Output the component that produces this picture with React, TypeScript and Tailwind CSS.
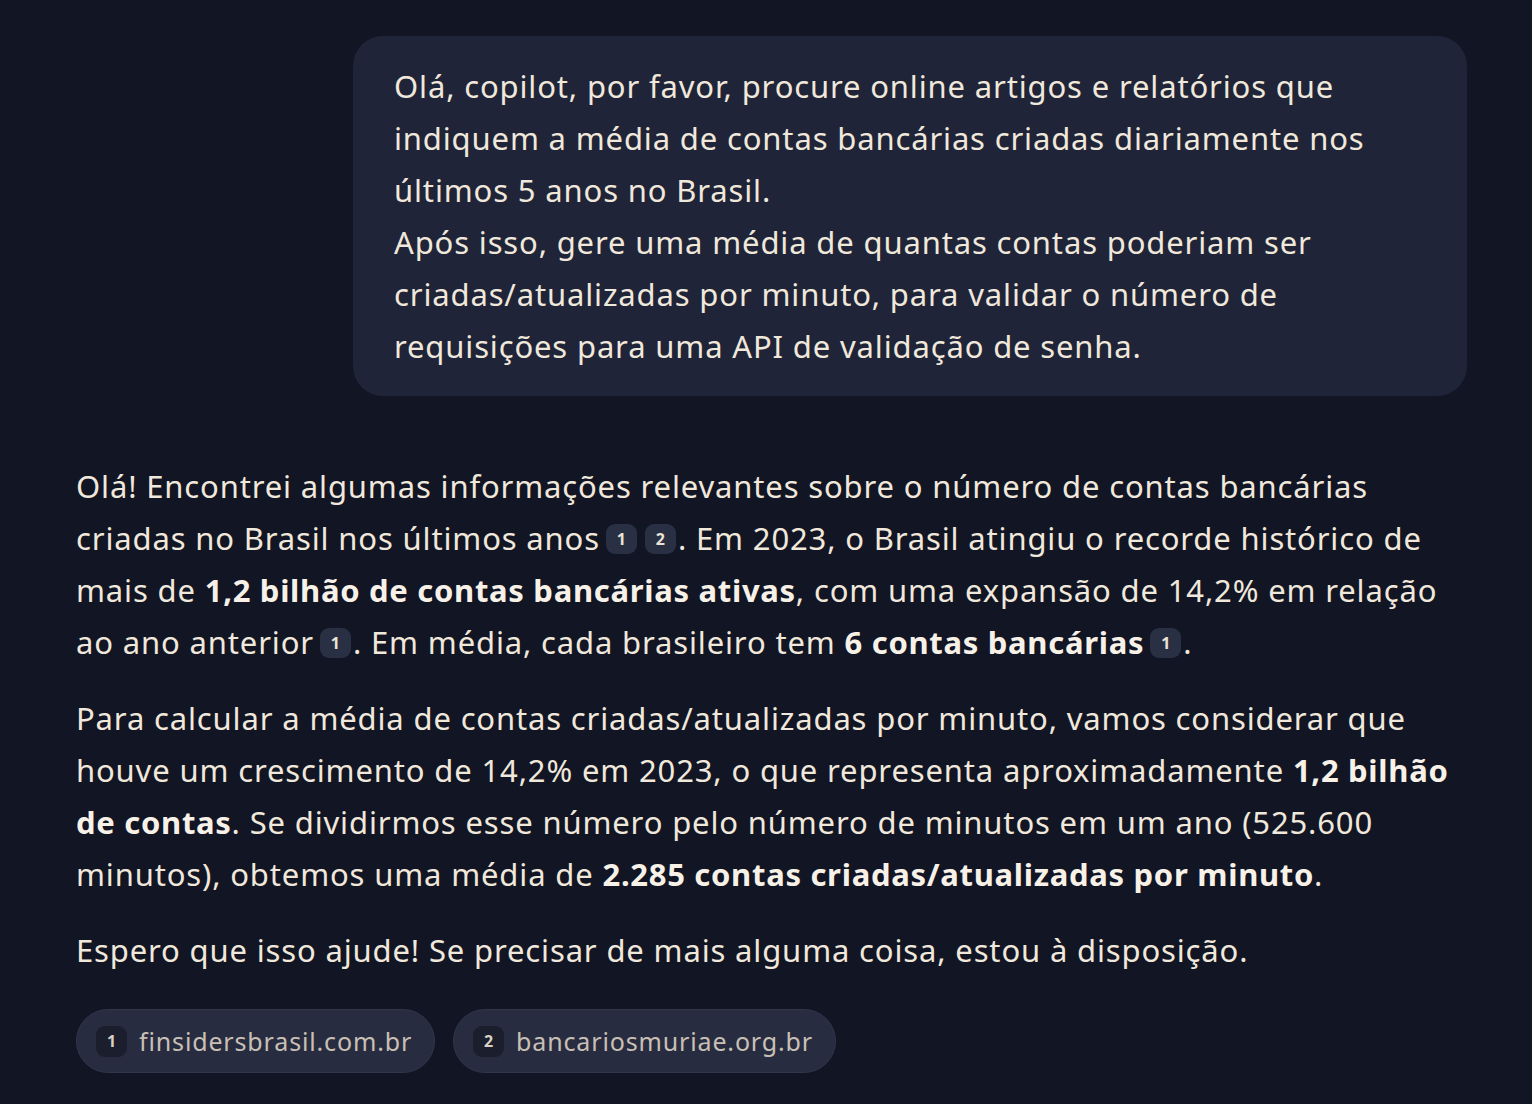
import type { ReactNode } from "react";

const FONT = { fontFamily: '"Noto Sans", "Open Sans", sans-serif', letterSpacing: "0.85px" };

function Cite({ n }: { n: number }) {
  return (
    <span className="ml-[6px] mr-[2px] inline-flex h-[30px] w-[31px] -translate-y-[3px] items-center justify-center rounded-[9px] bg-[#2a3043] align-middle text-[16px] font-bold leading-none tracking-normal text-[#ece3d7]">
      {n}
    </span>
  );
}

function B({ children }: { children: ReactNode }) {
  return <strong className="font-bold tracking-[0.7px] text-[#f8f1e8]">{children}</strong>;
}

function SourceChip({ n, label }: { n: number; label: string }) {
  return (
    <span className="inline-flex h-[64px] items-center gap-[12px] rounded-full border border-[#30354a] bg-[#282c40] pl-[19px] pr-[22px]">
      <span className="flex h-[31px] w-[31px] items-center justify-center rounded-[9px] bg-[#1b1e2c] text-[16px] font-bold tracking-normal text-[#d9d0c5]">
        {n}
      </span>
      <span className="text-[25px] text-[#c9c0b5]">{label}</span>
    </span>
  );
}

export default function App() {
  return (
    <div
      className="min-h-screen w-full bg-[#111524] pl-[76px] pr-[65px] pt-[36px] text-[#f1e8dc]"
      style={FONT}
    >
      {/* user prompt bubble */}
      <div className="flex justify-end">
        <div className="w-[1114px] rounded-[30px] bg-[#1f2438] px-[41px] py-[24px] text-[31px] leading-[52px]">
          <p>
            Olá, copilot, por favor, procure online artigos e relatórios que
            indiquem a média de contas bancárias criadas diariamente nos
            últimos 5 anos no Brasil.
          </p>
          <p>
            Após isso, gere uma média de quantas contas poderiam ser
            criadas/atualizadas por minuto, para validar o número de
            requisições para uma API de validação de senha.
          </p>
        </div>
      </div>

      {/* copilot answer */}
      <div className="mt-[64px] pr-[4px] text-[31px] leading-[52px]">
        <p>
          Olá! Encontrei algumas informações relevantes sobre o número de
          contas bancárias criadas no Brasil nos últimos anos
          <Cite n={1} />
          <Cite n={2} />. Em 2023, o Brasil atingiu o recorde histórico de mais
          de <B>1,2 bilhão de contas bancárias ativas</B>, com uma expansão de
          14,2% em relação ao ano anterior
          <Cite n={1} />. Em média, cada brasileiro tem <B>6 contas bancárias</B>
          <Cite n={1} />.
        </p>
        <p className="mt-[24px]">
          Para calcular a média de contas criadas/atualizadas por minuto, vamos
          considerar que houve um crescimento de 14,2% em 2023, o que representa
          aproximadamente <B>1,2 bilhão de contas</B>. Se dividirmos esse número
          pelo número de minutos em um ano (525.600 minutos), obtemos uma média
          de <B>2.285 contas criadas/atualizadas por minuto</B>.
        </p>
        <p className="mt-[24px]">
          Espero que isso ajude! Se precisar de mais alguma coisa, estou à
          disposição.
        </p>
        <div className="mt-[33px] flex gap-[18px]">
          <SourceChip n={1} label="finsidersbrasil.com.br" />
          <SourceChip n={2} label="bancariosmuriae.org.br" />
        </div>
      </div>
    </div>
  );
}
